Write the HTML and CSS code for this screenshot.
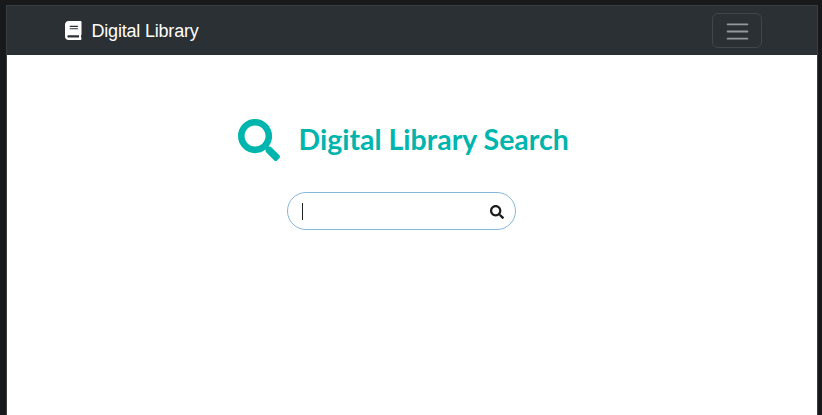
FILE: index.html
```html
<!DOCTYPE html>
<html lang="en">
<head>
<meta charset="utf-8">
<title>Digital Library</title>
<link rel="stylesheet" href="styles.css">
</head>
<body>
<div class="window">
  <header class="navbar">
    <a class="brand">
      <svg class="book" viewBox="0 0 448 512"><path fill="currentColor" d="M448 360V24c0-13.300-10.700-24-24-24H96C43 0 0 43 0 96v320c0 53 43 96 96 96h328c13.300 0 24-10.700 24-24v-16c0-7.500-3.500-14.300-8.900-18.700-4.200-15.400-4.200-59.300 0-74.700 5.400-4.300 8.900-11.100 8.900-18.600zM128 134c0-3.300 2.700-6 6-6h212c3.300 0 6 2.700 6 6v20c0 3.300-2.700 6-6 6H134c-3.300 0-6-2.700-6-6v-20zm0 64c0-3.300 2.700-6 6-6h212c3.300 0 6 2.700 6 6v20c0 3.300-2.700 6-6 6H134c-3.300 0-6-2.700-6-6v-20zm253.400 250H96c-17.700 0-32-14.300-32-32 0-17.600 14.400-32 32-32h285.400c-1.900 17.100-1.900 46.900 0 64z"/></svg>
      <span>Digital Library</span>
    </a>
    <button class="toggler" aria-label="Menu">
      <svg viewBox="0 0 30 30"><path stroke="currentColor" stroke-linecap="round" stroke-miterlimit="10" stroke-width="2" d="M4 7h22M4 15h22M4 23h22"/></svg>
    </button>
  </header>
  <main class="content">
    <h1 class="title">
      <svg class="title-icon" viewBox="0 0 512 512"><path fill="currentColor" d="M505 442.700L405.300 343c-4.500-4.500-10.600-7-17-7H372c27.600-35.300 44-79.700 44-128C416 93.100 322.900 0 208 0S0 93.100 0 208s93.100 208 208 208c48.300 0 92.700-16.400 128-44v16.300c0 6.400 2.500 12.500 7 17l99.700 99.700c9.400 9.400 24.600 9.400 33.900 0l28.300-28.300c9.400-9.400 9.400-24.600.1-34zM208 336c-70.700 0-128-57.200-128-128 0-70.700 57.200-128 128-128 70.700 0 128 57.200 128 128 0 70.700-57.200 128-128 128z"/></svg>
      <span>Digital Library Search</span>
    </h1>
    <div class="search">
      <span class="caret"></span>
      <svg class="search-icon" viewBox="0 0 512 512"><path fill="currentColor" d="M505 442.700L405.300 343c-4.500-4.500-10.600-7-17-7H372c27.600-35.300 44-79.700 44-128C416 93.100 322.900 0 208 0S0 93.100 0 208s93.100 208 208 208c48.300 0 92.700-16.400 128-44v16.300c0 6.400 2.500 12.500 7 17l99.700 99.700c9.400 9.400 24.600 9.400 33.900 0l28.300-28.300c9.400-9.400 9.400-24.600.1-34zM208 336c-70.700 0-128-57.200-128-128 0-70.700 57.200-128 128-128 70.700 0 128 57.200 128 128 0 70.700-57.200 128-128 128z"/></svg>
    </div>
  </main>
</div>
</body>
</html>
```
FILE: styles.css
```css
* { box-sizing: border-box; }
body {
  margin: 0;
  height: 415px;
  padding: 5px 4px 0 6px;
  overflow: hidden;
  background: #18191b;
  font-family: "Liberation Sans", Arial, sans-serif;
}
.window {
  height: 410px;
  border: 1px solid #3a3d40;
  border-bottom: 0;
  background: #fff;
}
.navbar {
  display: flex;
  align-items: center;
  justify-content: space-between;
  height: 49px;
  padding: 0 55px 0 58px;
  background: #2b3035;
}
.brand {
  display: flex;
  align-items: center;
  gap: 10px;
  color: #fff;
  font-size: 18px;
  line-height: 24px;
  letter-spacing: -0.2px;
}
.book { width: 16.500px; height: 19px; }
.toggler {
  display: flex;
  align-items: center;
  justify-content: center;
  width: 50px;
  height: 35px;
  padding: 0;
  border: 1px solid #41464b;
  border-radius: 6px;
  background: none;
  color: #95989a;
}
.toggler svg { width: 27px; height: 27px; margin-top: 1px; }
.content { padding-top: 64px; }
.title {
  display: flex;
  align-items: flex-start;
  gap: 19px;
  height: 42px;
  margin: 0 0 31px 230.500px;
  color: #00b5ad;
  font: 700 28.500px/40px Lato, sans-serif;
  white-space: nowrap;
}
.title-icon { width: 42px; height: 42px; flex: none; }
.search {
  display: flex;
  align-items: center;
  justify-content: space-between;
  width: 229px;
  height: 38px;
  margin-left: 280px;
  padding: 0 11px 0 14px;
  border: 1px solid #85b7d9;
  border-radius: 19px;
}
.caret { width: 1px; height: 17px; background: #222; }
.search-icon { width: 14px; height: 14px; margin-top: 1px; color: #1b1c1d; }
```
